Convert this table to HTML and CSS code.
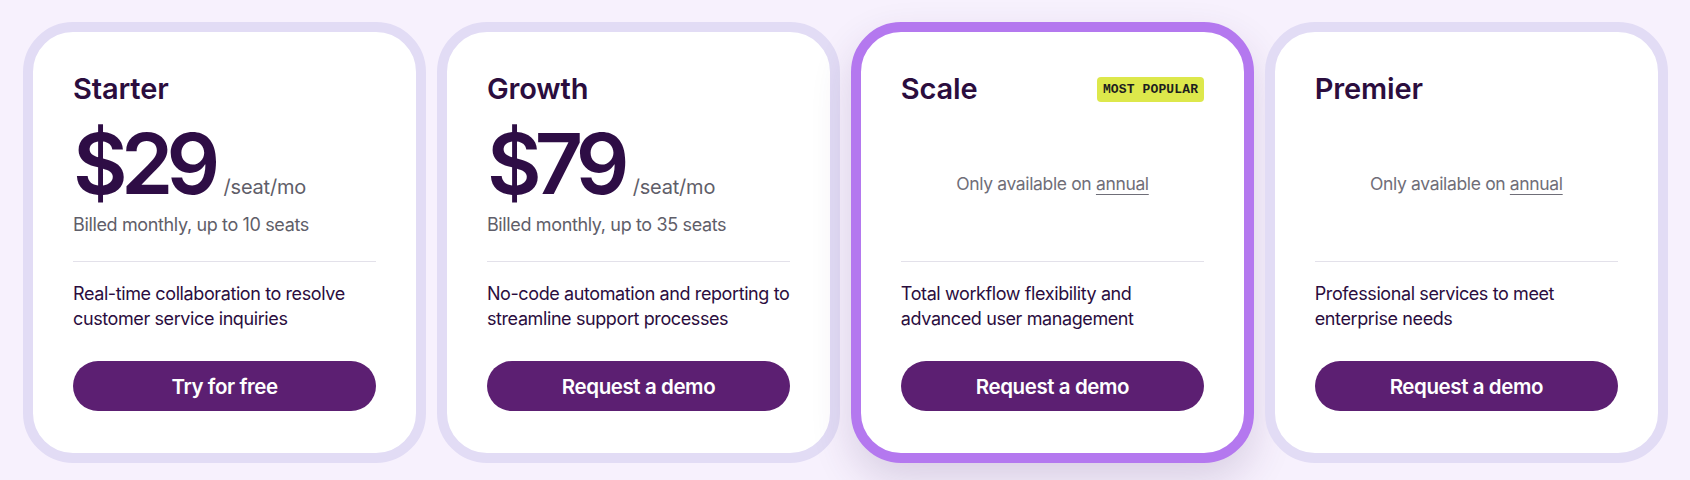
FILE: index.html
```html
<!DOCTYPE html>
<html lang="en">
<head>
<meta charset="utf-8">
<title>Pricing</title>
<link rel="stylesheet" href="styles.css">
</head>
<body>
<main class="plans">
  <section class="card">
    <div class="card-inner">
      <div class="head"><h2 class="name">Starter</h2></div>
      <div class="pricing">
        <div class="price-row"><span class="price">$29</span><span class="unit">/seat/mo</span></div>
        <p class="billed">Billed monthly, up to 10 seats</p>
      </div>
      <hr class="divider">
      <p class="desc">Real-time collaboration to resolve customer service inquiries</p>
      <a class="btn" href="#">Try for free</a>
    </div>
  </section>
  <section class="card">
    <div class="card-inner">
      <div class="head"><h2 class="name">Growth</h2></div>
      <div class="pricing">
        <div class="price-row"><span class="price">$79</span><span class="unit">/seat/mo</span></div>
        <p class="billed">Billed monthly, up to 35 seats</p>
      </div>
      <hr class="divider">
      <p class="desc">No-code automation and reporting to streamline support processes</p>
      <a class="btn" href="#">Request a demo</a>
    </div>
  </section>
  <section class="card card-featured">
    <div class="card-inner">
      <div class="head"><h2 class="name">Scale</h2><span class="badge">MOST POPULAR</span></div>
      <div class="pricing pricing-annual">
        <p class="annual-note">Only available on <a href="#">annual</a></p>
      </div>
      <hr class="divider">
      <p class="desc">Total workflow flexibility and advanced user management</p>
      <a class="btn" href="#">Request a demo</a>
    </div>
  </section>
  <section class="card">
    <div class="card-inner">
      <div class="head"><h2 class="name">Premier</h2></div>
      <div class="pricing pricing-annual">
        <p class="annual-note">Only available on <a href="#">annual</a></p>
      </div>
      <hr class="divider">
      <p class="desc">Professional services to meet enterprise needs</p>
      <a class="btn" href="#">Request a demo</a>
    </div>
  </section>
</main>
</body>
</html>
```

FILE: styles.css
```css
* { box-sizing: border-box; }
html, body { margin: 0; padding: 0; }
body {
  background: #f7f1fd;
  font-family: Inter, "Liberation Sans", Arial, sans-serif;
  color: #2b0d3e;
  width: 1690px;
  height: 480px;
  overflow: hidden;
}
.plans {
  display: grid;
  grid-template-columns: repeat(4, 1fr);
  gap: 10.7px;
  padding: 22px 22px 0 23px;
}
.card {
  border: 10px solid #e2dcf5;
  border-radius: 50px;
  background: #fff;
  height: 441px;
}
.card-featured {
  border-color: #b478ef;
  box-shadow: 0 18px 40px rgba(70, 40, 100, 0.16);
}
.card-inner {
  padding: 40px;
  display: flex;
  flex-direction: column;
}
.head {
  display: flex;
  justify-content: space-between;
  align-items: center;
  height: 34px;
}
.name {
  margin: 0;
  font-size: 29px;
  font-weight: 600;
  letter-spacing: -0.005em;
  line-height: 34px;
  color: #2b0d3e;
}
.badge {
  background: #dde84b;
  color: #1e1e1e;
  font-family: "Liberation Mono", "DejaVu Sans Mono", monospace;
  font-weight: 700;
  font-size: 13px;
  line-height: 25px;
  height: 25px;
  padding: 0 6px;
  border-radius: 4px;
  letter-spacing: 0.01em;
}
.pricing {
  height: 155px;
  padding-top: 16px;
}
.pricing-annual {
  display: flex;
  align-items: center;
  justify-content: center;
  padding-top: 0;
}
.price-row {
  display: flex;
  align-items: baseline;
  height: 84px;
}
.price {
  font-size: 84px;
  line-height: 84px;
  font-weight: 600;
  letter-spacing: -0.08em;
  color: #2e0d45;
}
.unit {
  font-size: 20px;
  color: #5f5e69;
  margin-left: 10px;
  letter-spacing: -0.01em;
}
.billed {
  margin: 7px 0 0;
  font-size: 18px;
  line-height: 24px;
  color: #5f5e69;
  letter-spacing: -0.02em;
}
.annual-note {
  margin: 0;
  font-size: 17.5px;
  line-height: 24px;
  color: #6f6e78;
  letter-spacing: -0.02em;
}
.annual-note a {
  color: #6f6e78;
  text-decoration: underline;
  text-underline-offset: 4px;
  text-decoration-thickness: 1px;
}
.divider {
  border: 0;
  border-top: 1px solid #e3e1ea;
  margin: 0;
  height: 0;
  width: 100%;
}
.desc {
  margin: 19px 0 0;
  font-size: 18px;
  line-height: 25px;
  letter-spacing: -0.022em;
  color: #2b0d3e;
  height: 50px;
}
.btn {
  margin-top: 30px;
  height: 50px;
  border-radius: 25px;
  background: #5c1f72;
  color: #fff;
  text-decoration: none;
  display: flex;
  align-items: center;
  justify-content: center;
  font-size: 20.5px;
  font-weight: 600;
  letter-spacing: -0.02em;
}
```
